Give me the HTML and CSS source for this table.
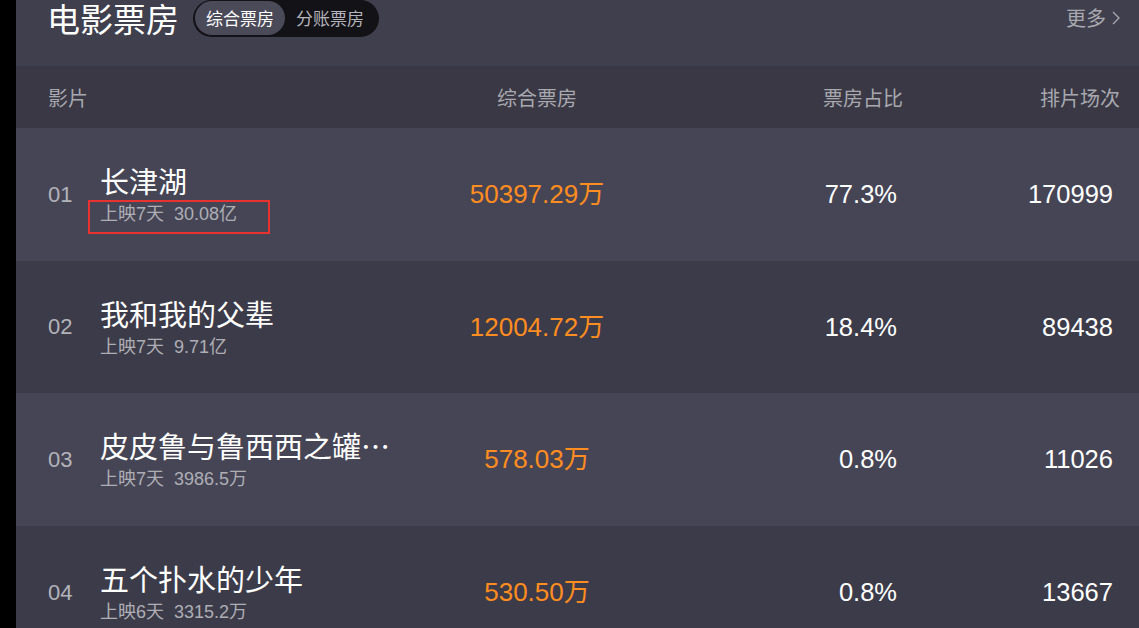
FILE: index.html
```html
<!DOCTYPE html>
<html lang="zh-CN">
<head>
<meta charset="utf-8">
<title>电影票房</title>
<link rel="stylesheet" href="styles.css">
</head>
<body>
<div class="page">
  <div class="top">
    <h1 class="top-title">电影票房</h1>
    <div class="toggle">
      <span class="tab tab-active">综合票房</span>
      <span class="tab">分账票房</span>
    </div>
    <a class="more">更多<svg class="chev" width="8" height="14" viewBox="0 0 8 14"><path d="M1 1 L7 7 L1 13" fill="none" stroke="#a9a9b0" stroke-width="1.3"/></svg></a>
  </div>
  <div class="thead">
    <span class="th-film">影片</span>
    <span class="th-box">综合票房</span>
    <span class="th-ratio">票房占比</span>
    <span class="th-sess">排片场次</span>
  </div>
  <div class="row">
    <span class="rank">01</span>
    <div class="film">
      <div class="name">长津湖</div>
      <div class="sub"><span>上映7天</span><span class="total">30.08亿</span></div>
    </div>
    <span class="box">50397.29万</span>
    <span class="ratio">77.3%</span>
    <span class="sess">170999</span>
    <div class="mark"></div>
  </div>
  <div class="row">
    <span class="rank">02</span>
    <div class="film">
      <div class="name">我和我的父辈</div>
      <div class="sub"><span>上映7天</span><span class="total">9.71亿</span></div>
    </div>
    <span class="box">12004.72万</span>
    <span class="ratio">18.4%</span>
    <span class="sess">89438</span>
  </div>
  <div class="row">
    <span class="rank">03</span>
    <div class="film">
      <div class="name">皮皮鲁与鲁西西之罐头电影</div>
      <div class="sub"><span>上映7天</span><span class="total">3986.5万</span></div>
    </div>
    <span class="box">578.03万</span>
    <span class="ratio">0.8%</span>
    <span class="sess">11026</span>
  </div>
  <div class="row">
    <span class="rank">04</span>
    <div class="film">
      <div class="name">五个扑水的少年</div>
      <div class="sub"><span>上映6天</span><span class="total">3315.2万</span></div>
    </div>
    <span class="box">530.50万</span>
    <span class="ratio">0.8%</span>
    <span class="sess">13667</span>
  </div>
</div>
</body>
</html>
```
FILE: styles.css
```css
html, body {
  margin: 0;
  padding: 0;
  background: #000;
  height: 628px;
  overflow: hidden;
}
body {
  font-family: "Liberation Sans", "Noto Sans CJK SC", sans-serif;
}
.page {
  margin-left: 16px;
  width: 1123px;
}
.top {
  box-sizing: border-box;
  height: 66px;
  background: #403f4e;
  padding: 0 19px 30px 31px;
  display: flex;
  align-items: center;
}
.top-title {
  margin: 0;
  font-family: "Noto Sans CJK SC", sans-serif;
  font-weight: 400;
  font-size: 33px;
  line-height: 36px;
  color: #fff;
}
.toggle {
  margin-left: 14px;
  height: 37px;
  box-sizing: border-box;
  padding: 1px 2px;
  background: #131217;
  border-radius: 19px;
  display: flex;
  align-items: center;
}
.tab {
  font-family: "Noto Sans CJK SC", sans-serif;
  font-size: 17px;
  line-height: 34px;
  height: 34px;
  color: #b4b4ba;
  padding: 0 13px 0 11px;
  border-radius: 17px;
}
.tab-active {
  background: #4b4a59;
  color: #fff;
  padding: 0 11px;
}
.more {
  margin-left: auto;
  font-family: "Noto Sans CJK SC", sans-serif;
  font-size: 20px;
  line-height: 36px;
  color: #a9a9b0;
  display: flex;
  align-items: center;
}
.chev {
  margin-left: 6px;
}
.thead {
  height: 62px;
  background: #393844;
  box-sizing: border-box;
  padding: 0 19px 0 32px;
  display: grid;
  grid-template-columns: 342px 294px 219px 217px;
  align-items: center;
  font-family: "Noto Sans CJK SC", sans-serif;
  font-size: 20px;
  color: #a8a8af;
}
.th-box { text-align: center; }
.th-ratio, .th-sess { text-align: right; }
.row {
  position: relative;
  height: 132.6px;
  box-sizing: border-box;
  padding: 0 26px 0 32px;
  display: grid;
  grid-template-columns: 52px 290px 294px 213px 216px;
  align-items: center;
}
.row:nth-child(odd) {
  background: #464555;
}
.row:nth-child(even) {
  background: #3c3b49;
}
.rank {
  font-size: 22px;
  line-height: 28px;
  color: #b3b3ba;
  padding-top: 1px;
}
.film {
  min-width: 0;
}
.name {
  font-family: "Noto Sans CJK SC", sans-serif;
  font-size: 29px;
  line-height: 41px;
  color: #fff;
  white-space: nowrap;
  overflow: hidden;
  text-overflow: ellipsis;
  width: 292px;
}
.sub {
  font-size: 18px;
  line-height: 27px;
  color: #aeaeb5;
  white-space: nowrap;
}
.total {
  margin-left: 10px;
}
.box {
  text-align: center;
  font-size: 26px;
  line-height: 30px;
  height: 30px;
  overflow: visible;
  color: #ff8d1f;
}
.ratio, .sess {
  text-align: right;
  font-size: 25.5px;
  line-height: 30px;
  color: #fff;
}
.mark {
  position: absolute;
  left: 72px;
  top: 72px;
  width: 182px;
  height: 34px;
  box-sizing: border-box;
  border: 2px solid #e8322f;
}
```
